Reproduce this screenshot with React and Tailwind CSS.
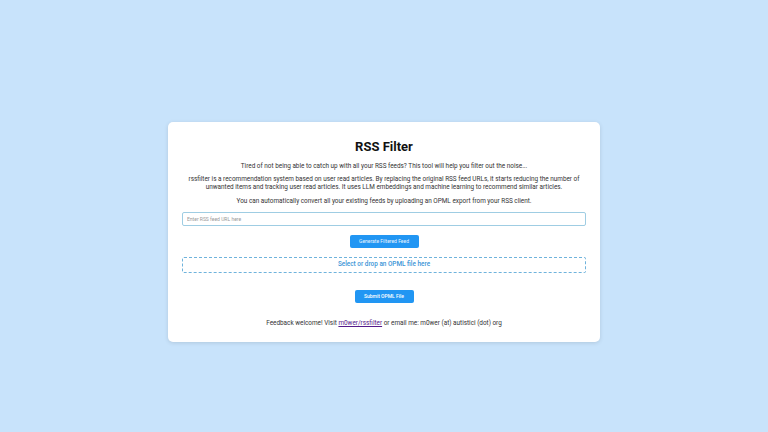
import React from 'react';

const App = () => {
  return (
    <div
      className="min-h-screen w-full bg-[#c8e3fb] flex justify-center pt-[122px]"
      style={{ fontFamily: 'Roboto, "Liberation Sans", sans-serif' }}
    >
      <div className="w-[432px] h-[220px] bg-white rounded-[5px] shadow-[0_1px_4px_rgba(0,0,0,0.12)] px-[14px] pt-[16px] flex flex-col items-center text-[#333]">
        <h1 className="text-[13px] leading-[17px] font-bold text-[#111]">RSS Filter</h1>
        <p className="mt-[7px] text-[6.4px] leading-[8px] text-center">
          Tired of not being able to catch up with all your RSS feeds? This tool will help you filter out the noise...
        </p>
        <p className="mt-[6px] text-[6.4px] leading-[7.5px] text-center">
          rssfilter is a recommendation system based on user read articles. By replacing the original RSS feed URLs, it starts reducing the number of unwanted items and tracking user read articles. It uses LLM embeddings and machine learning to recommend similar articles.
        </p>
        <p className="mt-[6px] text-[6.4px] leading-[8px] text-center">
          You can automatically convert all your existing feeds by uploading an OPML export from your RSS client.
        </p>
        <input
          type="text"
          placeholder="Enter RSS feed URL here"
          className="mt-[7px] w-full h-[14px] border border-[#9fcde3] rounded-[2px] px-[4px] text-[5px] placeholder:text-[#999] outline-none"
        />
        <button className="mt-[9px] h-[13px] w-[69px] rounded-[2px] bg-[#2196f3] text-[#e8f4ff] text-[5px]">
          Generate Filtered Feed
        </button>
        <div className="mt-[9px] w-full h-[16px] border border-dashed border-[#6fb3dc] rounded-[2px] flex items-center justify-center text-[6.4px] font-medium text-[#3a94d6]">
          Select or drop an OPML file here
        </div>
        <button className="mt-[17px] h-[13px] w-[59px] rounded-[2px] bg-[#2196f3] text-white text-[5px] font-medium">
          Submit OPML File
        </button>
        <p className="mt-[16px] text-[6.4px] leading-[8px] text-center">
          Feedback welcome! Visit{' '}
          <a href="#" className="underline text-[#551a8b]">m0wer/rssfilter</a> or email me: m0wer (at) autistici (dot) org
        </p>
      </div>
    </div>
  );
};

export default App;
